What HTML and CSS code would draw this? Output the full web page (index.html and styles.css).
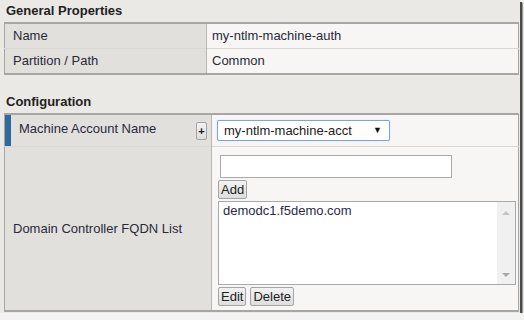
FILE: index.html
```html
<!DOCTYPE html>
<html lang="en">
<head>
  <meta charset="UTF-8" />
  <title>NTLM Machine Account</title>
  <link rel="stylesheet" href="styles.css">
</head>
<body>

  <div class="frame">

    <!-- General Properties -->
    <h3 class="section-title">General Properties</h3>
    <table class="props props-general">
      <tr>
        <td class="label">Name</td>
        <td class="value">my-ntlm-machine-auth</td>
      </tr>
      <tr>
        <td class="label">Partition / Path</td>
        <td class="value">Common</td>
      </tr>
    </table>

    <!-- Configuration -->
    <h3 class="section-title section-config">Configuration</h3>
    <table class="props props-config">
      <tr class="row-account">
        <td class="label label-required">
          <div class="label-inner">
            <span>Machine Account Name</span>
            <button class="btn btn-plus">+</button>
          </div>
        </td>
        <td class="value">
          <div class="select">
            <span>my-ntlm-machine-acct</span>
            <span class="select-arrow">&#9660;</span>
          </div>
        </td>
      </tr>
      <tr class="row-fqdn">
        <td class="label">Domain Controller FQDN List</td>
        <td class="value">
          <input class="text-input" type="text" />
          <div class="btn-row"><button class="btn">Add</button></div>
          <div class="listbox">
            <div class="list-items">demodc1.f5demo.com</div>
            <div class="scrollbar">
              <span class="arrow arrow-up"></span>
              <span class="arrow arrow-down"></span>
            </div>
          </div>
          <div class="btn-row">
            <button class="btn">Edit</button>
            <button class="btn">Delete</button>
          </div>
        </td>
      </tr>
    </table>

  </div>

</body>
</html>
```

FILE: styles.css
```css
* {
  box-sizing: border-box;
  margin: 0;
  padding: 0;
}

body {
  background: #f2f2f2;
  font-family: "Liberation Sans", Arial, sans-serif;
  font-size: 13px;
  color: #2a2a3a;
}

.frame {
  width: 520px;
  height: 313px;
  background: #ebe9e5;
  padding: 5px 0 0 4px;
  box-shadow: 2px 2px 0 #4a4a4a, 3px 3px 1px #9a9a9a;
}

.section-title {
  font-size: 13px;
  font-weight: bold;
  color: #222;
  padding-left: 2px;
  height: 17px;
  line-height: 12px;
}

.section-config {
  margin-top: 20px;
  height: 18px;
  line-height: 14px;
}

.props {
  width: 515px;
  border-collapse: collapse;
  border: 1px solid #a6a6a4;
  border-top-width: 2px;
  border-bottom-width: 2px;
}

.props td {
  border-top: 1px solid #d9d8d5;
}

.label {
  background: #e1e0dd;
  border-right: 1px solid #b8b7b4;
  padding-left: 8px;
  vertical-align: middle;
}

.value {
  background: #f7f6f4;
  padding-left: 5px;
}

.props-general .label {
  width: 202px;
}

.props-general td {
  height: 25px;
}

.props-general tr + tr td {
  height: 26px;
}

.props-config .label {
  width: 207px;
}

.row-account td {
  height: 32px;
}

.label-required {
  box-shadow: inset 6px 0 0 #2d6aa0;
  padding-left: 14px;
  padding-right: 4px;
}

.row-account .label {
  vertical-align: top;
  padding-top: 6px;
}

.label-inner {
  display: flex;
  justify-content: space-between;
  align-items: flex-start;
}

.btn {
  font-family: "Liberation Sans", Arial, sans-serif;
  font-size: 13px;
  color: #222;
  background: linear-gradient(#f2f2f2, #dedede);
  border: 1px solid #a4a4a4;
  border-radius: 2px;
  height: 19px;
  padding: 0 2px;
  line-height: 17px;
}

.btn-plus {
  width: 11px;
  height: 18px;
  padding: 0;
  font-size: 11px;
  font-weight: bold;
  margin-top: 1px;
}

.select {
  width: 173px;
  height: 21px;
  border: 1px solid #7ea4e0;
  border-radius: 2px;
  box-shadow: 0 0 1px #9cbcf0;
  background: #fff;
  display: flex;
  justify-content: space-between;
  align-items: center;
  padding: 0 7px 0 6px;
  color: #222;
}

.select-arrow {
  font-size: 9px;
  color: #111;
}

.row-fqdn td {
  height: 165px;
}

.row-fqdn .value {
  vertical-align: top;
  padding-top: 8px;
  padding-left: 6px;
}

.text-input {
  display: block;
  width: 232px;
  height: 23px;
  margin-left: 2px;
  border: 1px solid #a9a9a9;
  background: #fff;
}

.btn-row {
  display: flex;
  gap: 4px;
  margin-top: 2px;
}

.listbox {
  display: flex;
  width: 298px;
  height: 84px;
  margin-top: 2px;
  border: 1px solid #a9a9a9;
  background: #fff;
}

.list-items {
  flex: 1;
  padding: 1px 0 0 4px;
  color: #2a2a4a;
}

.scrollbar {
  width: 18px;
  background: #f0f0f0;
  display: flex;
  flex-direction: column;
  justify-content: space-between;
  align-items: center;
  padding: 9px 0 7px;
}

.arrow {
  width: 0;
  height: 0;
  border-left: 4px solid transparent;
  border-right: 4px solid transparent;
}

.arrow-up {
  border-bottom: 4px solid #c4c4c4;
}

.arrow-down {
  border-top: 4px solid #a8a8a8;
}
```
